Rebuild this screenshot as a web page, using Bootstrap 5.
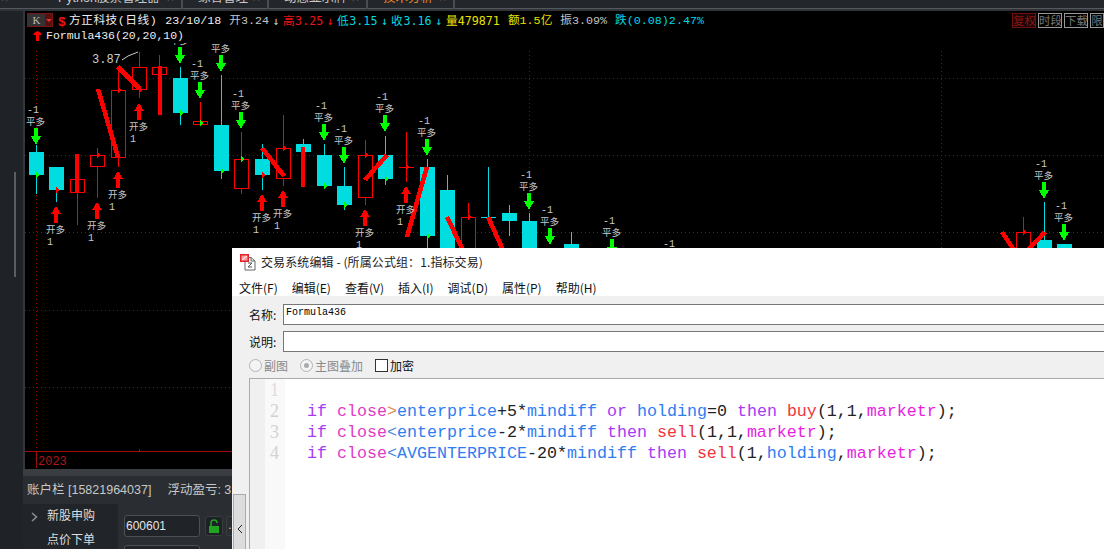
<!DOCTYPE html>
<html lang="zh-CN">
<head>
<meta charset="UTF-8">
<title>方正科技 - 交易系统编辑</title>
<link href="https://cdn.jsdelivr.net/npm/bootstrap@5.3.0/dist/css/bootstrap.min.css" rel="stylesheet">
<style>
    html, body { height: 100%; }
    body {
        width: 1104px; height: 549px; overflow: hidden; position: relative;
        background: #1f2226; color: #ccc;
        font-family: "Liberation Sans", "Noto Sans CJK SC", sans-serif; font-size: 12px;
    }
    .tab-strip { height: 11px; overflow: hidden; border-bottom: 2px solid #303337; box-shadow: inset 0 -1px 0 #55585c; background: #23262b; }
    .tab-close { width: 43px; padding-left: 1px; }
    .tab-item { padding: 0 7px 0 15px; border-right: 2px solid #4a4d51; height: 9px; color: #c8c8c8; }
    .tab-item > span, .tab-close > span { margin-top: -8px; line-height: 13px; white-space: nowrap; font-size: 12.5px; }
    .tab-first { width: 140px; }
    .tab-second { width: 86px; }
    .tab-third { width: 99px; }
    .tab-fourth { width: 87px; color: #f08a24; }
    .left-rail { width: 25px; background: #1f2226; position: relative; flex: none; }
    .rail-thumb { width: 2px; height: 105px; margin: 161px 0 0 14px; background: #5a5d61; }
    .rail-edge { width: 2px; background: #33363a; margin-left: 7px; }
    .chart-pane { flex: 1; background: #000; height: 458px; min-width: 0; }
    .quote-row { height: 18px; padding: 2px 0 0 2px; font-family: "Liberation Mono", "Noto Sans CJK SC", monospace; font-size: 11.7px; white-space: nowrap; }
    .period-btn { width: 26px; height: 14px; border: 1px solid #7a1515; margin-right: 5px; line-height: 12px; }
    .period-btn b { width: 17px; background: #333; color: #bbb; font-weight: 400; text-align: center; font-family: "Liberation Serif", serif; font-size: 11px; }
    .period-btn i { flex: 1; background: #5b1010; position: relative; }
    .period-btn i::after { content: ""; position: absolute; left: 1px; top: 5px; border: 3px solid transparent; border-top-color: #d33; }
    .dollar { color: #f01414; font-weight: 700; font-size: 13px; width: 11px; }
    .q-white { color: #eee; }
    .q-red { color: #f01414; }
    .q-cyan { color: #00d8e0; }
    .q-yellow { color: #e8e000; }
    .q-gray { color: #c4c4c4; }
    .q-gap { margin-left: 8px; }
    .q-arrow { margin-left: 3.5px; font-family: "DejaVu Sans Mono", monospace; }
    .q-name { letter-spacing: .5px; }
    .tool-tag { width: 24px; height: 15px; border: 1px solid #999; color: #777; margin-left: 2px; line-height: 13px; text-align: center; overflow: hidden; flex: none; font-size: 11.5px; font-family: "Noto Sans CJK SC", sans-serif; }
    .tool-on { border-color: #701010; color: #8a1616; background: #1c0505; }
    .tool-cut { width: 14px; margin-right: 0; }
    .formula-row { height: 14px; padding-left: 8px; color: #eee; font-family: "Liberation Mono", monospace; font-size: 11.5px; line-height: 14px; }
    .chart-canvas { display: block; }
    .sig-label { fill: #c8c8c8; font-size: 9.5px; font-family: "Noto Sans CJK SC", sans-serif; }
    .sig-num { fill: #c8c8c8; font-size: 10px; font-family: "Liberation Mono", monospace; }
    .peak-label { fill: #ccc; font-size: 12px; font-family: "Liberation Mono", monospace; }
    .year-label { fill: #b01818; font-size: 12px; font-family: "Liberation Mono", monospace; }
    .grid-dots { stroke: #a00000; stroke-width: 1; stroke-dasharray: 1 3; }
    .bottom-pane { height: 80px; margin-left: 23px; background: #2a2d31; }
    .bottom-bar { height: 7px; background: #3a3d41; }
    .account-row { height: 28px; padding-left: 4px; color: #c8c8c8; white-space: nowrap; font-size: 12.5px; }
    .account-pnl { margin-left: 16px; }
    .side-menu { width: 95px; height: 45px; background: #212429; padding: 0 0 0 8px; color: #ddd; flex: none; }
    .side-menu > div { height: 24px; }
    .side-chevron { width: 16px; }
    .order-pane { padding: 11px 0 0 6px; }
    .code-input { width: 76px; height: 22px; border: 1px solid #4c4f53; border-radius: 3px; background: #202327; color: #e4e4e4; padding-left: 1px; line-height: 20px; }
    .lock-btn { width: 18px; height: 20px; margin: 1px 0 0 5px; border: 1px solid #3a3d40; border-radius: 3px; background: #1e2125; }
    .more-btn { width: 8px; height: 20px; margin: 1px 0 0 3px; border: 1px solid #3a3d40; border-radius: 2px 0 0 2px; line-height: 16px; text-align: center; color: #ccc; }
    .code-input-two { margin-top: 8px; height: 12px; }
    .editor-window { position: absolute; left: 232px; top: 248px; right: 0; bottom: 0; background: #f0f0f0; color: #000; font-family: "Noto Sans CJK SC", "Liberation Sans", sans-serif; font-size: 12px; }
    .window-head { background: #fff; height: 48px; }
    .window-title { height: 27px; padding: 1px 0 0 8px; color: #222; letter-spacing: .1px; }
    .window-title svg { margin-right: 5px; }
    .window-menu { height: 21px; padding-left: 7px; gap: 14px; color: #111; margin-top: 2px; }
    .window-body { padding: 2px 0 0 17px; position: relative; }
    .collapse-tab { position: absolute; left: 1px; top: 198px; width: 13px; height: 70px; background: #dcdcdc; border: 1px solid #aaa; }
    .form-line { height: 27px; padding-top: 6px; }
    .form-line label { width: 34px; flex: none; color: #111; padding-top: 2px; }
    .form-value { flex: 1; height: 21px; background: #fff; border: 1px solid #777; border-right: 0; padding-left: 2px; font-family: "Liberation Mono", monospace; font-size: 10px; line-height: 16px; color: #000; }
    .option-row { height: 19px; margin-top: 7px; color: #8a8a8a; line-height: 14px; }
    .fake-radio { width: 13px; height: 13px; border-radius: 50%; border: 1px solid #b4b4b4; background: #f4f4f4; margin-right: 2px; display: block; position: relative; }
    .fake-radio.is-on::after { content: ""; position: absolute; left: 3px; top: 3px; width: 5px; height: 5px; border-radius: 50%; background: #aaa; }
    .fake-check { width: 13px; height: 13px; border: 1px solid #333; background: #fff; margin-right: 2px; display: block; }
    .option-gap { margin-left: 12px; }
    .option-dark { color: #111; }
    .code-box { height: 171px; border: 1px solid #aaa; border-right: 0; border-bottom: 0; background: #fff; }
    .code-gutter { width: 15px; background: #f0f0f0; flex: none; }
    .code-nums { width: 20px; background: #f9f9f9; flex: none; padding: 1px 0 0 5px; color: #d2d2d2; font-family: "Liberation Serif", serif; font-size: 18px; line-height: 21px; }
    .code-nums .num-first { color: #e2dada; }
    .code-text { padding: 1px 0 0 22px; font-family: "Liberation Mono", monospace; font-size: 16.67px; line-height: 21px; white-space: pre; color: #222; }
    .tk-kw { color: #a63cf2; }
    .tk-close { color: #e03cc4; }
    .tk-gt { color: #e0884a; }
    .tk-lt { color: #4a8ad8; }
    .tk-var { color: #2f7df2; }
    .tk-fn { color: #f0343c; }
    .tk-mk { color: #e61ee0; }
</style>
</head>
<body>

<div class="tab-strip d-flex">
    <div class="tab-close d-flex"><span>×</span></div>
    <div class="tab-item tab-first d-flex justify-content-between"><span>Python股票管理器</span><span>×</span></div>
    <div class="tab-item tab-second d-flex justify-content-between"><span>综合管理</span><span>×</span></div>
    <div class="tab-item tab-third d-flex justify-content-between"><span>动态显示牌</span><span>×</span></div>
    <div class="tab-item tab-fourth d-flex justify-content-between"><span>技术分析</span><span>×</span></div>
</div>

<div class="d-flex">
    <div class="left-rail d-flex"><div class="rail-thumb"></div><div class="rail-edge"></div></div>
    <div class="chart-pane">
        <div class="quote-row d-flex align-items-start">
            <div class="period-btn d-flex"><b>K</b><i></i></div>
            <span class="dollar">$</span>
            <span class="q-white q-name">方正科技(日线)</span>
            <span class="q-white q-gap">23/10/18</span>
            <span class="q-gray q-gap">开3.24</span><span class="q-gray q-arrow">↓</span>
            <span class="q-red q-arrow">高3.25</span><span class="q-red q-arrow">↓</span>
            <span class="q-cyan q-arrow">低3.15</span><span class="q-cyan q-arrow">↓</span>
            <span class="q-cyan q-arrow">收3.16</span><span class="q-cyan q-arrow">↓</span>
            <span class="q-yellow q-arrow">量479871</span>
            <span class="q-yellow q-gap">额1.5亿</span>
            <span class="q-gray q-gap">振3.09%</span>
            <span class="q-cyan q-gap">跌(0.08)2.47%</span>
            <span class="tool-tag tool-on ms-auto">复权</span>
            <span class="tool-tag">时段</span>
            <span class="tool-tag">下载</span>
            <span class="tool-tag tool-cut">限</span>
        </div>
        <div class="formula-row d-flex align-items-center gap-1">
            <svg width="9" height="10" viewBox="0 0 9 10"><path d="M0 4 Q1 1 4.5 0 Q8 1 9 4 H6 V10 H3 V4 Z" fill="#f00"/></svg>
            <span>Formula436(20,20,10)</span>
        </div>
        <svg id="chart" class="chart-canvas" width="1079" height="426" viewBox="25 43 1079 426" shape-rendering="crispEdges"></svg>
    </div>
</div>

<div class="bottom-pane">
    <div class="bottom-bar"></div>
    <div class="account-row d-flex align-items-center">
        <span>账户栏 [15821964037]</span><span class="account-pnl">浮动盈亏: 3.</span>
    </div>
    <div class="d-flex">
        <div class="side-menu">
            <div class="d-flex align-items-center">
                <div class="side-chevron"><svg width="7" height="10" viewBox="0 0 7 10"><path d="M1 1 L5.5 5 L1 9" fill="none" stroke="#8a8d90" stroke-width="1.6"/></svg></div>
                <span>新股申购</span>
            </div>
            <div class="d-flex align-items-center">
                <div class="side-chevron"></div>
                <span>点价下单</span>
            </div>
        </div>
        <div class="order-pane flex-grow-1">
            <div class="d-flex">
                <div class="code-input">600601</div>
                <div class="lock-btn d-flex align-items-center justify-content-center">
                    <svg width="12" height="15" viewBox="0 0 12 15"><path d="M3 7 V4 Q3 1 6 1 Q9 1 9 4" fill="none" stroke="#1fa51f" stroke-width="1.6"/><rect x="1" y="7" width="10" height="7" fill="#1fa51f"/></svg>
                </div>
                <div class="more-btn">.</div>
            </div>
            <div class="code-input code-input-two"></div>
        </div>
    </div>
</div>

<div class="editor-window">
    <div class="window-head">
        <div class="window-title d-flex align-items-center">
            <svg width="16" height="17" viewBox="0 0 16 17"><path d="M5 3.5 H11 L15 7 V16 H5 Z M11 3.5 V7 H15" fill="#fff" stroke="#666"/><path d="M8 9 H12 L8 13 H12" fill="none" stroke="#555"/><rect x="0" y="0" width="9" height="8" fill="#e8222c"/><rect x="1.5" y="1.5" width="6" height="5" fill="#f7a0a0"/><path d="M2 6 L7 2" stroke="#fff"/></svg>
            <span>交易系统编辑 - (所属公式组：1.指标交易)</span>
        </div>
        <div class="window-menu d-flex align-items-center">
            <span>文件(F)</span><span>编辑(E)</span><span>查看(V)</span><span>插入(I)</span><span>调试(D)</span><span>属性(P)</span><span>帮助(H)</span>
        </div>
    </div>
    <div class="window-body">
        <div class="collapse-tab d-flex align-items-center justify-content-center">
            <svg width="6" height="10" viewBox="0 0 6 10"><path d="M5 1 L1 5 L5 9" fill="none" stroke="#222"/></svg>
        </div>
        <div class="form-line d-flex"><label>名称:</label><div class="form-value">Formula436</div></div>
        <div class="form-line d-flex"><label>说明:</label><div class="form-value"></div></div>
        <div class="option-row d-flex align-items-start">
            <span class="fake-radio"></span><span>副图</span>
            <span class="fake-radio is-on option-gap"></span><span>主图叠加</span>
            <span class="fake-check option-gap"></span><span class="option-dark">加密</span>
        </div>
        <div class="code-box d-flex">
            <div class="code-gutter"></div>
            <div class="code-nums"><div class="num-first">1</div><div>2</div><div>3</div><div>4</div></div>
            <div class="code-text"><div> </div><div><span class="tk-kw">if</span> <span class="tk-close">close</span><span class="tk-gt">&gt;</span><span class="tk-var">enterprice</span>+5*<span class="tk-var">mindiff</span> <span class="tk-kw">or</span> <span class="tk-var">holding</span>=0 <span class="tk-kw">then</span> <span class="tk-fn">buy</span>(1,1,<span class="tk-mk">marketr</span>);</div><div><span class="tk-kw">if</span> <span class="tk-close">close</span><span class="tk-lt">&lt;</span><span class="tk-var">enterprice</span>-2*<span class="tk-var">mindiff</span> <span class="tk-kw">then</span> <span class="tk-fn">sell</span>(1,1,<span class="tk-mk">marketr</span>);</div><div><span class="tk-kw">if</span> <span class="tk-close">close</span><span class="tk-lt">&lt;</span><span class="tk-var">AVGENTERPRICE</span>-20*<span class="tk-var">mindiff</span> <span class="tk-kw">then</span> <span class="tk-fn">sell</span>(1,<span class="tk-var">holding</span>,<span class="tk-mk">marketr</span>);</div></div>
        </div>
    </div>
</div>

<script>
    // [left, top, bottom, wickTop, wickBottom]
    const cyanBars = [
        [29,152,175,145,194],[49,167,190,167,202],[173,78,113,67,125],[214,125,171,75,179],
        [255,159,175,144,190],[296,144,152,139,152],[317,155,186,144,189],[337,186,205,167,210],
        [378,155,179,136,185],[420,167,236,159,260],[440,190,260,175,260],[502,213,221,205,236],
        [522,221,260,213,260],[564,244,260,232,260],[1037,240,260,202,260],[1057,244,260,244,260]
    ];
    const redBars = [
        [70,179,193,179,225],[90,155,167,148,198],[111,90,158,67,167],[132,67,90,52,98],
        [152,67,75,55,75],[193,121,125,102,125],[234,159,189,132,194],[276,148,179,115,186],
        [358,155,198,140,205],[461,217,260,203,260],[1016,232,260,217,260]
    ];
    // [x1, y1, x2, y2]
    const slashes = [
        [98,89,118,157],[118,67,140,89],[262,148,284,176],[365,180,387,155],[427,167,407,237],
        [447,217,463,250],[488,217,503,250],[1002,232,1014,250],[1045,232,1028,250]
    ];
    const thickBars = [[77,154,192],[160,66,115],[303,147,187]];
    const sellSignals = [[36,128],[180,47],[200,82],[221,55],[241,112],[324,124],[344,147],[385,115],[427,139],[529,193],[550,228],[612,239],[1044,182],[1064,224]];
    const buySignals = [[56,206],[97,202],[118,171],[139,103],[262,194],[283,190],[365,209],[406,186]];
    const greenFlags = [[36,175],[180,113],[200,123],[221,171],[241,159],[324,186],[344,205],[385,179],[427,236]];
    const redFlags = [[56,190],[97,155],[118,90],[139,90],[262,175],[283,148],[365,155],[406,167],[468,217],[1023,232]];

    let svg = '';

    [78,155,232,310,387].forEach(y => {
        svg += `<line class="grid-dots" x1="25" x2="1104" y1="${y + .5}" y2="${y + .5}"/>`;
    });
    [36,529,941].forEach(x => {
        svg += `<line class="grid-dots" x1="${x + .5}" x2="${x + .5}" y1="51" y2="451"/>`;
    });

    cyanBars.forEach(([l, t, b, wt, wb]) => {
        svg += `<rect x="${l + 7}" y="${wt}" width="1" height="${wb - wt}" fill="#00dde0"/>`;
        svg += `<rect x="${l}" y="${t}" width="15" height="${b - t}" fill="#00dde0"/>`;
    });
    redBars.forEach(([l, t, b, wt, wb]) => {
        svg += `<rect x="${l + 7}" y="${wt}" width="1" height="${wb - wt}" fill="#f00"/>`;
        svg += `<rect x="${l + .5}" y="${t + .5}" width="14" height="${b - t - 1}" fill="#000" stroke="#f00"/>`;
    });
    // the two crosses: open and close on one price
    svg += '<rect x="406" y="132" width="1" height="50" fill="#f00"/><rect x="399" y="167" width="15" height="1" fill="#f00"/>';
    svg += '<rect x="488" y="167" width="1" height="50" fill="#00dde0"/><rect x="481" y="217" width="15" height="1" fill="#00dde0"/>';

    thickBars.forEach(([x, t, b]) => {
        svg += `<rect x="${x - 2}" y="${t}" width="4" height="${b - t}" fill="#f00"/>`;
    });
    slashes.forEach(([x1, y1, x2, y2]) => {
        svg += `<line x1="${x1}" y1="${y1}" x2="${x2}" y2="${y2}" stroke="#f00" stroke-width="4.5"/>`;
    });

    greenFlags.forEach(([x, y]) => {
        svg += `<path d="M${x} ${y - 3} L${x + 4} ${y} L${x} ${y + 3} Z" fill="#0f0"/>`;
    });
    redFlags.forEach(([x, y]) => {
        svg += `<path d="M${x} ${y - 3} L${x + 4} ${y} L${x} ${y + 3} Z" fill="#f00"/>`;
    });

    sellSignals.forEach(([x, y]) => {
        svg += `<path d="M${x - 2} ${y} H${x + 2} V${y + 8} H${x + 5} L${x} ${y + 17} L${x - 5} ${y + 8} H${x - 2} Z" fill="#0f0"/>`;
        svg += `<text class="sig-label" x="${x - 10}" y="${y - 3}" textLength="19">平多</text>`;
        // numbers of the top two signals would sit behind the header rows
        if (y > 60) {
            svg += `<text class="sig-num" x="${x - 9}" y="${y - 15}">-1</text>`;
        }
    });
    buySignals.forEach(([x, y]) => {
        svg += `<path d="M${x - 2} ${y + 17} H${x + 2} V${y + 8} H${x + 5} L${x} ${y} L${x - 5} ${y + 8} H${x - 2} Z" fill="#f00"/>`;
        svg += `<text class="sig-label" x="${x - 10}" y="${y + 27}" textLength="19">开多</text>`;
        svg += `<text class="sig-num" x="${x - 9}" y="${y + 39}">1</text>`;
    });
    // signal whose arrow lies under the editor window
    svg += '<text class="sig-num" x="663" y="247">-1</text>';

    svg += '<text class="peak-label" x="92" y="63">3.87</text>';
    svg += '<path d="M122 60 L128 56 L138 52" fill="none" stroke="#ccc" shape-rendering="auto"/>';

    svg += '<rect x="25" y="451" width="1079" height="1" fill="#a01010"/>';
    svg += '<rect x="36" y="452" width="1" height="16" fill="#a01010"/>';
    svg += '<rect x="139" y="449" width="1" height="2" fill="#a01010"/>';
    svg += '<text class="year-label" x="38" y="465">2023</text>';

    document.getElementById('chart').innerHTML = svg;
</script>
<script src="https://cdn.jsdelivr.net/npm/bootstrap@5.3.0/dist/js/bootstrap.bundle.min.js"></script>
</body>
</html>
